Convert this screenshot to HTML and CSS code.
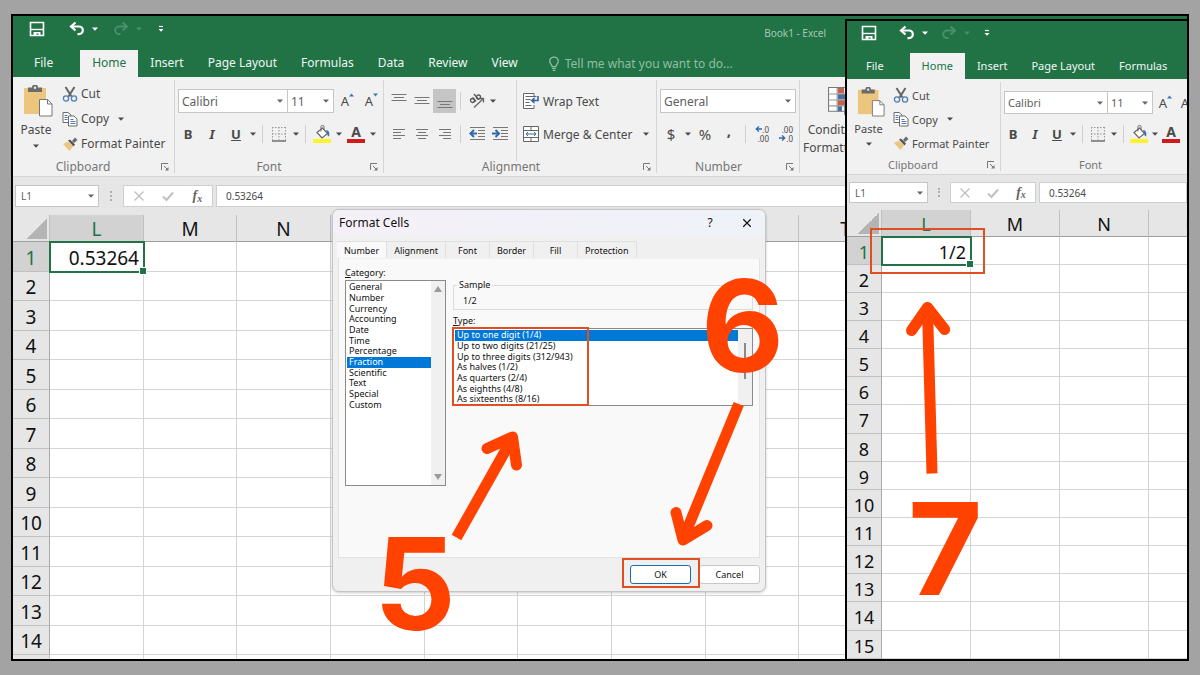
FILE: index.html
```
<!DOCTYPE html>
<html lang="en">
<head>
	<meta charset="utf-8">
	<title>Book1 - Excel</title>
	<link rel="stylesheet" href="styles.css">
</head>
<body>
	<svg class="sprite" aria-hidden="true">
		<symbol id="i-save" viewBox="0 0 16 16"><path d="M1.500 1.500h13v13h-13z" fill="none" stroke="currentColor" stroke-width="1.600"/><path d="M2 8.500h12" stroke="currentColor" stroke-width="1.400"/><path d="M4.500 11h7v3.500h-2v-2h-2v2h-3z" fill="currentColor"/></symbol>
		<symbol id="i-undo" viewBox="0 0 16 16"><path d="M3 5.500h7a3.800 3.800 0 0 1 0 7.600H8.500" fill="none" stroke="currentColor" stroke-width="2.200"/><path d="M6.500 1.500L2 5.500l4.500 4" fill="none" stroke="currentColor" stroke-width="2.200"/></symbol>
		<symbol id="i-redo" viewBox="0 0 16 16"><path d="M13 5.500H6a3.800 3.800 0 0 0 0 7.600h1.500" fill="none" stroke="currentColor" stroke-width="2"/><path d="M9.500 1.500L14 5.500l-4.500 4" fill="none" stroke="currentColor" stroke-width="2"/></symbol>
		<symbol id="i-more" viewBox="0 0 8 8"><path d="M2 1.500h4" stroke="currentColor" stroke-width="1.200"/><path d="M1.500 4h5L4 6.800z" fill="currentColor"/></symbol>
		<symbol id="i-down" viewBox="0 0 8 8"><path d="M1 2.500h6L4 5.800z" fill="currentColor"/></symbol>
		<symbol id="i-bulb" viewBox="0 0 12 18"><path d="M4 12c0-2-2.800-3-2.800-6a4.800 4.800 0 0 1 9.600 0c0 3-2.800 4-2.800 6z" fill="none" stroke="currentColor" stroke-width="1.500"/><path d="M4 14h4M4.500 16.200h3" stroke="currentColor" stroke-width="1.400"/></symbol>
		<symbol id="i-paste" viewBox="0 0 30 32"><path d="M1 3h22v26H1z" fill="#ebc67c"/><path d="M5 2.500h4a3 3 0 0 1 6 0h4V7H5z" fill="#6b6b6b"/><circle cx="12" cy="2.800" r="1.200" fill="#f1f1f1"/><path d="M16.500 14.500h8l4.500 4.500v12H16.500z" fill="#fff" stroke="#777"/><path d="M24.500 14.500V19H29" fill="none" stroke="#777"/></symbol>
		<symbol id="i-cut" viewBox="0 0 16 16"><path d="M3.500 1l6 9.500M12.500 1l-6 9.500" stroke="#666" stroke-width="2"/><circle cx="4" cy="12.500" r="2.600" fill="none" stroke="#4d7fb5" stroke-width="1.300"/><circle cx="12" cy="12.500" r="2.600" fill="none" stroke="#4d7fb5" stroke-width="1.300"/></symbol>
		<symbol id="i-copy" viewBox="0 0 16 16"><path d="M1 1.500h5L9 4v7.500H1z" fill="#fff" stroke="#6b6b6b"/><path d="M2.500 4.500h3M2.500 6.500h3M2.500 8.500h3" stroke="#4d7fb5"/><path d="M6.500 5h5.500l3 3v7H6.500z" fill="#fff" stroke="#6b6b6b"/><path d="M8.500 8.500h3M8.500 10.500h5M8.500 12.500h5" stroke="#4d7fb5"/></symbol>
		<symbol id="i-painter" viewBox="0 0 16 16"><path d="M1 8l5-2.500 5 5L7.500 15z" fill="#ebc67c"/><path d="M6 4.500l2-1 5 5-1.500 2z" fill="#555"/><path d="M10 5l3-3.500L15.500 4 12 7z" fill="#6b6b6b"/></symbol>
		<symbol id="i-launch" viewBox="0 0 8 8"><path d="M.5 7V.5H7" fill="none" stroke="#777"/><path d="M3 3l3 3" stroke="#777"/><path d="M7.500 4v3.500H4z" fill="#777"/></symbol>
		<symbol id="i-border" viewBox="0 0 16 16"><path d="M1.500 1v13M8 1v13M14.500 1v13M1 1.500h14M1 8h14" stroke="#999" stroke-dasharray="1.500 1.500"/><path d="M1 15h14" stroke="#666" stroke-width="1.400"/></symbol>
		<symbol id="i-fill" viewBox="0 0 18 18"><path d="M4 7.500l5.500-4.500 5 5.500-5.500 4.500z" fill="#fff" stroke="#666" stroke-width="1.200"/><path d="M8 6.500V1.500c0-1.500 3-1.500 3 0v3" fill="none" stroke="#666"/><path d="M13 5c3 0 4 3 3 6.500-1.500-.5-2-2-2-4z" fill="#3f76b5"/><path d="M0 14h18v4H0z" fill="#fdf32d"/></symbol>
		<symbol id="i-color" viewBox="0 0 18 4"><path d="M0 0h18v4H0z" fill="#d11a1a"/></symbol>
		<symbol id="i-grow" viewBox="0 0 6 4"><path d="M0 3.500h5L2.500.5z" fill="#3f76b5"/></symbol>
		<symbol id="i-shrink" viewBox="0 0 6 4"><path d="M0 .5h5L2.500 3.500z" fill="#3f76b5"/></symbol>
		<symbol id="i-top" viewBox="0 0 16 16"><path d="M.5 1.500h15M3 4.500h10M.5 7.500h15" stroke="#777"/></symbol>
		<symbol id="i-middle" viewBox="0 0 16 16"><path d="M.5 4.500h15M3 7.500h10M.5 10.500h15" stroke="#777"/></symbol>
		<symbol id="i-bottom" viewBox="0 0 16 16"><path d="M.5 8.500h15M3 11.500h10M.5 14.500h15" stroke="#777"/></symbol>
		<symbol id="i-left" viewBox="0 0 16 16"><path d="M2 3.500h12M2 6.500h8M2 9.500h12M2 12.500h8" stroke="#777"/></symbol>
		<symbol id="i-center" viewBox="0 0 16 16"><path d="M2 3.500h12M4 6.500h8M2 9.500h12M4 12.500h8" stroke="#777"/></symbol>
		<symbol id="i-right" viewBox="0 0 16 16"><path d="M2 3.500h12M6 6.500h8M2 9.500h12M6 12.500h8" stroke="#777"/></symbol>
		<symbol id="i-outdent" viewBox="0 0 16 16"><path d="M1 1.500h15M9 4.500h7M9 7.500h7M9 10.500h7M1 13.500h15" stroke="#777"/><path d="M1 7.500h7" stroke="#3068a8" stroke-width="2"/><path d="M5 4L1.500 7.500 5 11" fill="none" stroke="#3068a8" stroke-width="2"/></symbol>
		<symbol id="i-indent" viewBox="0 0 16 16"><path d="M1 1.500h15M9 4.500h7M9 7.500h7M9 10.500h7M1 13.500h15" stroke="#777"/><path d="M0 7.500h7" stroke="#3068a8" stroke-width="2"/><path d="M3.500 4L7 7.500 3.500 11" fill="none" stroke="#3068a8" stroke-width="2"/></symbol>
		<symbol id="i-orient" viewBox="0 0 16 16"><path d="M5 14.500L14 6M10.500 5.500h4v4" fill="none" stroke="#666" stroke-width="1.300"/><circle cx="3.500" cy="7.500" r="2" fill="none" stroke="#555" stroke-width="1.300"/><path d="M3.500 4.500l3.500 4M5 1l4.500 5.500" stroke="#555" stroke-width="1.300"/><circle cx="9.500" cy="4" r="2" fill="none" stroke="#555" stroke-width="1.300"/></symbol>
		<symbol id="i-wrap" viewBox="0 0 16 16"><path d="M11 3V.5H.5v15H11V12" fill="#fff" stroke="#666"/><path d="M2.500 3.500h11M2.500 6.500h5M2.500 9.500h4M2.500 12.500h6" stroke="#666"/><path d="M15 3v4.500H10" fill="none" stroke="#3068a8" stroke-width="1.600"/><path d="M11.500 4v7L7.500 7.500z" fill="#3068a8"/></symbol>
		<symbol id="i-merge" viewBox="0 0 16 16"><path d="M.5.5h15v15H.5z" fill="#fff" stroke="#666"/><path d="M.5 4.500h15M.5 11.500h15M8 .5v4M8 11.500v4" stroke="#666"/><path d="M3 8h10" stroke="#3068a8"/><path d="M5 6L3 8l2 2M11 6l2 2-2 2" fill="none" stroke="#3068a8"/></symbol>
		<symbol id="i-arrow-l" viewBox="0 0 8 8"><path d="M1.500 4H8M4.500 1L1.500 4l3 3" fill="none" stroke="#3068a8" stroke-width="1.600"/></symbol>
		<symbol id="i-arrow-r" viewBox="0 0 8 8"><path d="M0 4h6.500M3.500 1l3 3-3 3" fill="none" stroke="#3068a8" stroke-width="1.600"/></symbol>
		<symbol id="i-cond" viewBox="0 0 26 26"><path d="M.5.5h24v22H.5z" fill="#fff" stroke="#777"/><path d="M9 1h6v5H9zM9 12h7v5H9z" fill="#c8614c"/><path d="M9 6.500h13v5H9zM9 17.500h4v5H9z" fill="#4a6fa8"/><path d="M.5 6.500h24M.5 12h24M.5 17.500h24M8.500.5v22M16.500.5v22" stroke="#999"/><path d="M15.500 15.500h10v10h-10z" fill="#fff" stroke="#777"/></symbol>
		<symbol id="i-x" viewBox="0 0 12 12"><path d="M1.500 1.500l9 9M10.500 1.500l-9 9" stroke="currentColor" stroke-width="1.400"/></symbol>
		<symbol id="i-check" viewBox="0 0 12 12"><path d="M1 6.500l3.500 3.500L11 2.500" fill="none" stroke="currentColor" stroke-width="2"/></symbol>
	</svg>

	<main class="stage">
		<section class="window">
			<header class="titlebar">
				<div class="qat">
					<button class="save" aria-label="Save"><svg><use href="#i-save"/></svg></button>
					<div class="split"><button aria-label="Undo"><svg><use href="#i-undo"/></svg></button><button aria-label="Undo list"><svg class="tiny"><use href="#i-down"/></svg></button></div>
					<div class="split off"><button aria-label="Redo"><svg><use href="#i-redo"/></svg></button><button aria-label="Redo list"><svg class="tiny"><use href="#i-down"/></svg></button></div>
					<button aria-label="Customize toolbar"><svg class="tiny"><use href="#i-more"/></svg></button>
				</div>
				<span class="doc-name">Book1 - Excel</span>
			</header>
			<nav class="tabs">
				<a href="#" class="file">File</a>
				<a href="#" class="active">Home</a>
				<a href="#">Insert</a>
				<a href="#">Page Layout</a>
				<a href="#">Formulas</a>
				<a href="#">Data</a>
				<a href="#">Review</a>
				<a href="#">View</a>
				<label class="tell"><svg><use href="#i-bulb"/></svg><input type="text" placeholder="Tell me what you want to do..." aria-label="Tell me what you want to do"></label>
			</nav>
			<div class="ribbon">
				<div class="group clipboard">
					<div class="group-body">
						<button class="paste"><svg class="big"><use href="#i-paste"/></svg>Paste<svg class="tiny"><use href="#i-down"/></svg></button>
						<div class="stack">
							<button><svg><use href="#i-cut"/></svg>Cut</button>
							<button><svg><use href="#i-copy"/></svg>Copy<svg class="tiny"><use href="#i-down"/></svg></button>
							<button><svg><use href="#i-painter"/></svg>Format Painter</button>
						</div>
					</div>
					<div class="group-foot"><span>Clipboard</span><button aria-label="Clipboard options"><svg><use href="#i-launch"/></svg></button></div>
				</div>
				<div class="group font">
					<div class="group-body rows">
						<div class="row">
							<select class="family" aria-label="Font"><option>Calibri</option></select>
							<select class="size" aria-label="Font size"><option>11</option></select>
							<button class="tool step" aria-label="Increase font size">A<svg><use href="#i-grow"/></svg></button>
							<button class="tool step" aria-label="Decrease font size">A<svg><use href="#i-shrink"/></svg></button>
						</div>
						<div class="row">
							<button class="tool"><b>B</b></button>
							<button class="tool"><b><i>I</i></b></button>
							<button class="tool"><b><u>U</u></b></button>
							<button class="drop" aria-label="Underline style"><svg><use href="#i-down"/></svg></button>
							<span class="sep"></span>
							<button class="tool" aria-label="Borders"><svg><use href="#i-border"/></svg></button>
							<button class="drop" aria-label="Border style"><svg><use href="#i-down"/></svg></button>
							<span class="sep"></span>
							<button class="tool paint" aria-label="Fill color"><svg><use href="#i-fill"/></svg></button>
							<button class="drop" aria-label="Fill colors"><svg><use href="#i-down"/></svg></button>
							<button class="tool paint">A<svg class="bar"><use href="#i-color"/></svg></button>
							<button class="drop" aria-label="Font colors"><svg><use href="#i-down"/></svg></button>
						</div>
					</div>
					<div class="group-foot"><span>Font</span><button aria-label="Font options"><svg><use href="#i-launch"/></svg></button></div>
				</div>
				<div class="group alignment">
					<div class="group-body">
						<div class="rows">
							<div class="row">
								<button class="tool" aria-label="Top align"><svg><use href="#i-top"/></svg></button>
								<button class="tool" aria-label="Middle align"><svg><use href="#i-middle"/></svg></button>
								<button class="tool pressed" aria-label="Bottom align"><svg><use href="#i-bottom"/></svg></button>
								<span class="sep"></span>
								<button class="tool" aria-label="Orientation"><svg><use href="#i-orient"/></svg></button>
								<button class="drop" aria-label="Orientation list"><svg><use href="#i-down"/></svg></button>
							</div>
							<div class="row">
								<button class="tool" aria-label="Align left"><svg><use href="#i-left"/></svg></button>
								<button class="tool" aria-label="Center"><svg><use href="#i-center"/></svg></button>
								<button class="tool" aria-label="Align right"><svg><use href="#i-right"/></svg></button>
								<span class="sep"></span>
								<button class="tool" aria-label="Decrease indent"><svg><use href="#i-outdent"/></svg></button>
								<button class="tool" aria-label="Increase indent"><svg><use href="#i-indent"/></svg></button>
							</div>
						</div>
						<div class="rows wrapping">
							<button class="row"><svg><use href="#i-wrap"/></svg>Wrap Text</button>
							<button class="row"><svg><use href="#i-merge"/></svg>Merge &amp; Center<svg class="tiny"><use href="#i-down"/></svg></button>
						</div>
					</div>
					<div class="group-foot"><span>Alignment</span><button aria-label="Alignment options"><svg><use href="#i-launch"/></svg></button></div>
				</div>
				<div class="group number">
					<div class="group-body rows">
						<div class="row"><select class="format" aria-label="Number format"><option>General</option></select></div>
						<div class="row">
							<button class="tool sign">$</button>
							<button class="drop" aria-label="Currency list"><svg><use href="#i-down"/></svg></button>
							<button class="tool sign">%</button>
							<button class="tool sign comma">,</button>
							<span class="sep"></span>
							<button class="tool decimals"><span><svg><use href="#i-arrow-l"/></svg>.0</span><span>.00</span></button>
							<button class="tool decimals"><span>.00</span><span><svg><use href="#i-arrow-r"/></svg>.0</span></button>
						</div>
					</div>
					<div class="group-foot"><span>Number</span><button aria-label="Number options"><svg><use href="#i-launch"/></svg></button></div>
				</div>
				<div class="group styles">
					<button class="paste"><svg class="big"><use href="#i-cond"/></svg><span>Conditional</span><span>Formatting <svg class="tiny"><use href="#i-down"/></svg></span></button>
				</div>
			</div>
			<div class="formula-bar">
				<select class="name-box" aria-label="Name box"><option>L1</option></select>
				<span class="dots"></span>
				<div class="fx-box">
					<button aria-label="Cancel entry"><svg><use href="#i-x"/></svg></button>
					<button aria-label="Confirm entry"><svg><use href="#i-check"/></svg></button>
					<button class="fx"><i>f</i><i class="sub">x</i></button>
				</div>
				<input class="formula" type="text" value="0.53264" aria-label="Formula">
			</div>
			<table class="sheet" data-rows="14" data-value="0.53264">
				<thead>
					<tr><th class="corner"></th><th class="current">L</th><th>M</th><th>N</th><th>O</th><th>P</th><th>Q</th><th>R</th><th>S</th><th>T</th><th>U</th><th>V</th><th>W</th></tr>
				</thead>
				<tbody></tbody>
				<tfoot>
					<tr><th></th><td></td><td></td><td></td><td></td><td></td><td></td><td></td><td></td><td></td><td></td><td></td><td></td></tr>
				</tfoot>
			</table>
		</section>

		<section class="dialog" role="dialog" aria-labelledby="dialog-title">
			<header class="dialog-head">
				<h2 id="dialog-title">Format Cells</h2>
				<button>?</button>
				<button aria-label="Close"><svg><use href="#i-x"/></svg></button>
			</header>
			<div class="dialog-tabs" role="tablist">
				<button role="tab" class="active">Number</button>
				<button role="tab">Alignment</button>
				<button role="tab" class="narrow">Font</button>
				<button role="tab" class="narrow">Border</button>
				<button role="tab" class="narrow">Fill</button>
				<button role="tab">Protection</button>
			</div>
			<div class="panel">
				<div class="category">
					<span class="caption" id="cat-label"><u>C</u>ategory:</span>
					<div class="listbox">
						<ul role="listbox" aria-labelledby="cat-label">
							<li role="option">General</li>
							<li role="option">Number</li>
							<li role="option">Currency</li>
							<li role="option">Accounting</li>
							<li role="option">Date</li>
							<li role="option">Time</li>
							<li role="option">Percentage</li>
							<li role="option" class="picked" aria-selected="true">Fraction</li>
							<li role="option">Scientific</li>
							<li role="option">Text</li>
							<li role="option">Special</li>
							<li role="option">Custom</li>
						</ul>
						<div class="scroll"><span class="up"></span><span class="down"></span></div>
					</div>
				</div>
				<div class="detail">
					<fieldset class="sample"><legend>Sample</legend>1/2</fieldset>
					<span class="caption" id="type-label"><u>T</u>ype:</span>
					<div class="listbox types">
						<ul role="listbox" aria-labelledby="type-label">
							<li role="option" class="picked" aria-selected="true">Up to one digit (1/4)</li>
							<li role="option">Up to two digits (21/25)</li>
							<li role="option">Up to three digits (312/943)</li>
							<li role="option">As halves (1/2)</li>
							<li role="option">As quarters (2/4)</li>
							<li role="option">As eighths (4/8)</li>
							<li role="option">As sixteenths (8/16)</li>
						</ul>
						<div class="scroll"><span class="thumb"></span></div>
					</div>
				</div>
			</div>
			<footer class="dialog-foot">
				<button class="ok">OK</button>
				<button>Cancel</button>
			</footer>
		</section>

		<section class="window small">
			<header class="titlebar">
				<div class="qat">
					<button class="save" aria-label="Save"><svg><use href="#i-save"/></svg></button>
					<div class="split"><button aria-label="Undo"><svg><use href="#i-undo"/></svg></button><button aria-label="Undo list"><svg class="tiny"><use href="#i-down"/></svg></button></div>
					<div class="split off"><button aria-label="Redo"><svg><use href="#i-redo"/></svg></button><button aria-label="Redo list"><svg class="tiny"><use href="#i-down"/></svg></button></div>
					<button aria-label="Customize toolbar"><svg class="tiny"><use href="#i-more"/></svg></button>
				</div>
			</header>
			<nav class="tabs">
				<a href="#" class="file">File</a>
				<a href="#" class="active">Home</a>
				<a href="#">Insert</a>
				<a href="#">Page Layout</a>
				<a href="#">Formulas</a>
			</nav>
			<div class="ribbon">
				<div class="group clipboard">
					<div class="group-body">
						<button class="paste"><svg class="big"><use href="#i-paste"/></svg>Paste<svg class="tiny"><use href="#i-down"/></svg></button>
						<div class="stack">
							<button><svg><use href="#i-cut"/></svg>Cut</button>
							<button><svg><use href="#i-copy"/></svg>Copy<svg class="tiny"><use href="#i-down"/></svg></button>
							<button><svg><use href="#i-painter"/></svg>Format Painter</button>
						</div>
					</div>
					<div class="group-foot"><span>Clipboard</span><button aria-label="Clipboard options"><svg><use href="#i-launch"/></svg></button></div>
				</div>
				<div class="group font">
					<div class="group-body rows">
						<div class="row">
							<select class="family" aria-label="Font"><option>Calibri</option></select>
							<select class="size" aria-label="Font size"><option>11</option></select>
							<button class="tool step" aria-label="Increase font size">A<svg><use href="#i-grow"/></svg></button>
							<button class="tool step" aria-label="Decrease font size">A<svg><use href="#i-shrink"/></svg></button>
						</div>
						<div class="row">
							<button class="tool"><b>B</b></button>
							<button class="tool"><b><i>I</i></b></button>
							<button class="tool"><b><u>U</u></b></button>
							<button class="drop" aria-label="Underline style"><svg><use href="#i-down"/></svg></button>
							<span class="sep"></span>
							<button class="tool" aria-label="Borders"><svg><use href="#i-border"/></svg></button>
							<button class="drop" aria-label="Border style"><svg><use href="#i-down"/></svg></button>
							<span class="sep"></span>
							<button class="tool paint" aria-label="Fill color"><svg><use href="#i-fill"/></svg></button>
							<button class="drop" aria-label="Fill colors"><svg><use href="#i-down"/></svg></button>
							<button class="tool paint">A<svg class="bar"><use href="#i-color"/></svg></button>
						</div>
					</div>
					<div class="group-foot"><span>Font</span><button aria-label="Font options"><svg><use href="#i-launch"/></svg></button></div>
				</div>
			</div>
			<div class="formula-bar">
				<select class="name-box" aria-label="Name box"><option>L1</option></select>
				<span class="dots"></span>
				<div class="fx-box">
					<button aria-label="Cancel entry"><svg><use href="#i-x"/></svg></button>
					<button aria-label="Confirm entry"><svg><use href="#i-check"/></svg></button>
					<button class="fx"><i>f</i><i class="sub">x</i></button>
				</div>
				<input class="formula" type="text" value="0.53264" aria-label="Formula">
			</div>
			<table class="sheet" data-rows="15" data-value="1/2">
				<thead>
					<tr><th class="corner"></th><th class="current">L</th><th>M</th><th>N</th><th>O</th></tr>
				</thead>
				<tbody></tbody>
			</table>
		</section>

		<!-- step markers over the windows -->
		<span class="frame frame-types"></span>
		<span class="frame frame-ok"></span>
		<span class="frame frame-result"></span>
		<svg class="arrows" viewBox="13 16 1174 643" aria-hidden="true">
			<path d="M456.500 537.500L512.500 438"/>
			<path class="head" d="M487 448.500L512.500 437L516.500 465"/>
			<path d="M738.700 404L683.500 538"/>
			<path class="head" d="M676 512.500L683 540L707 525.500"/>
			<path d="M932 473.500L927.500 309"/>
			<path class="head" d="M911.500 330.500L927.500 307.500L944.700 329.500"/>
		</svg>
		<span class="step-5">5</span>
		<span class="step-6">6</span>
		<span class="step-7">7</span>
	</main>

	<script>
		const sheets = document.querySelectorAll('.sheet');

		function fillSheet(sheet) {
			const cols = sheet.querySelectorAll('thead th').length - 1;
			const body = sheet.querySelector('tbody');
			for (let r = 1; r <= Number(sheet.dataset.rows); r++) {
				const row = body.insertRow();
				const head = document.createElement('th');
				head.textContent = r;
				row.appendChild(head);
				for (let c = 0; c < cols; c++) {
					row.insertCell();
				}
			}
			const first = body.rows[0];
			first.cells[0].classList.add('current');
			first.cells[1].classList.add('selected');
			first.cells[1].textContent = sheet.dataset.value;
		}

		sheets.forEach(fillSheet);
	</script>
</body>
</html>
```
FILE: styles.css
```
* {
	box-sizing: border-box;
}
body {
	margin: 0;
	padding: 14px 11px;
	height: 100vh;
	background-color: #a3a3a3;
	font-family: "Noto Sans", "Open Sans", sans-serif;
	font-size: 12px;
	color: #4a4a4a;
}
button, select, input {
	margin: 0;
	padding: 0;
	border: none;
	background: none;
	border-radius: 0;
	font: inherit;
	color: inherit;
}
button {
	display: flex;
	align-items: center;
	justify-content: center;
	white-space: nowrap;
}
svg {
	flex: none;
	width: 16px;
	height: 16px;
}
.tiny {
	width: 8px;
	height: 8px;
}
.sprite {
	position: absolute;
	width: 0;
	height: 0;
}
.stage {
	position: relative;
	height: 100%;
	border: 2px solid #000;
	overflow: hidden;
}

/* excel window */
.window {
	--tool: 24px;
	--row: 24px;
	height: 100%;
	overflow: hidden;
	background-color: #fff;
}
.titlebar {
	display: flex;
	justify-content: space-between;
	height: 34px;
	padding: 0 361px 0 16px;
	background-color: #217346;
	color: #fff;
}
.qat {
	display: flex;
	align-items: center;
	gap: 14px;
	height: 26px;
}
.save {
	margin-right: 10px;
}
.split {
	display: flex;
	gap: 6px;
}
.off {
	color: #4a8f68;
}
.doc-name {
	font-size: 10px;
	line-height: 34px;
	color: #a3c9b2;
}
.tabs {
	display: flex;
	height: 27px;
	background-color: #217346;
}
.tabs a {
	padding: 0 12px;
	line-height: 26px;
	color: #f0f6f2;
	text-decoration: none;
	white-space: nowrap;
}
.tabs .file {
	padding: 0 27px 0 21px;
}
.tabs .active {
	background-color: #f1f1f1;
	color: #217346;
}
.tell {
	display: flex;
	align-items: center;
	gap: 5px;
	margin-left: 18px;
	color: #8fbfa2;
}
.tell svg {
	width: 12px;
}
.tell input {
	width: 200px;
}
.tell input::placeholder {
	color: #8fbfa2;
}
.ribbon {
	display: flex;
	height: 100px;
	background-color: #f1f1f1;
	border-bottom: 1px solid #d5d5d5;
}
.group {
	display: flex;
	flex-direction: column;
	flex: none;
	border-right: 1px solid #d5d5d5;
	margin: 3px 0;
}
.group-body {
	display: flex;
	flex: 1;
}
.group-foot {
	display: flex;
	align-items: center;
	height: 12px;
	padding-right: 5px;
	line-height: 12px;
	color: #767676;
}
.group-foot span {
	flex: 1;
	padding-right: 8px;
	text-align: center;
}
.group-foot svg {
	width: 8px;
	height: 8px;
}
.clipboard {
	width: 162px;
}
.paste {
	flex-direction: column;
	justify-content: flex-start;
	width: 46px;
	padding-top: 5px;
}
.paste .big {
	width: 30px;
	height: 32px;
	margin: 0 0 4px 4px;
}
.paste .tiny {
	margin-top: 4px;
}
.stack {
	padding-top: 1px;
	padding-left: 3px;
}
.stack button {
	gap: 3px;
	height: 25px;
}
.stack .tiny, .wrapping .tiny {
	margin-left: 5px;
}
.font {
	width: 209px;
	padding-left: 1px;
}
.alignment {
	--tool: 23px;
	width: 273px;
	padding-left: 3px;
}
.number {
	width: 143px;
	padding-left: 2px;
}
.rows {
	display: flex;
	flex-direction: column;
	gap: 9px;
	padding-top: 9px;
}
.row {
	display: flex;
	align-items: center;
	height: var(--row);
}
select {
	appearance: none;
	height: var(--row);
	padding: 0 3px;
	border: 1px solid #c6c6c6;
	background: #fff url("data:image/svg+xml,%3Csvg xmlns='http://www.w3.org/2000/svg' width='8' height='8'%3E%3Cpath d='M1 2.500h6L4 5.800z' fill='%23666'/%3E%3C/svg%3E") no-repeat right 3px center;
	color: #606060;
}
.family {
	width: 110px;
	margin-left: 2px;
}
.size {
	width: 46px;
	border-left: none;
}
.format {
	width: 136px;
	margin-left: 1px;
}
.tool {
	width: var(--tool);
	height: var(--row);
	font-size: 13px;
}
.drop {
	width: 10px;
	height: var(--row);
}
.drop svg {
	width: 8px;
	height: 8px;
}
.sep {
	width: 1px;
	height: 18px;
	margin: 0 4px;
	background-color: #d0d0d0;
}
.pressed {
	background-color: #c5c5c5;
}
.step {
	padding-left: 4px;
}
.step svg {
	width: 6px;
	height: 4px;
	margin-bottom: 12px;
}
.paint {
	flex-direction: column;
	font-weight: bold;
	font-size: 14px;
	line-height: 14px;
}
.paint svg {
	width: 18px;
	height: 18px;
}
.paint .bar {
	height: 4px;
}
.sign {
	font-size: 15px;
}
.comma {
	padding-bottom: 8px;
	font-weight: bold;
}
.decimals {
	flex-direction: column;
	align-items: flex-end;
	padding-right: 5px;
	font-size: 8px;
	line-height: 9px;
}
.decimals span {
	display: flex;
}
.decimals svg {
	width: 7px;
	height: 8px;
}
.wrapping {
	margin-left: 5px;
	padding-left: 6px;
	border-left: 1px solid #d5d5d5;
}
.wrapping .row {
	justify-content: flex-start;
	gap: 4px;
}
.styles {
	border: none;
}
.styles .paste {
	width: 80px;
	padding-top: 7px;
	line-height: 18px;
}
.styles .big {
	width: 28px;
	height: 28px;
	margin-bottom: 6px;
}

/* formula bar */
.formula-bar {
	display: flex;
	height: 38px;
	padding: 8px 0 8px 2px;
	background-color: #e6e6e6;
	font-size: 10px;
}
.name-box {
	width: 84px;
	height: 100%;
	padding-left: 5px;
	font-size: 10px;
}
.dots {
	width: 1px;
	margin: 6px 11px;
	border-left: 2px dotted #b0b0b0;
}
.fx-box {
	display: flex;
	width: 90px;
	border: 1px solid #cfcfcf;
	background-color: #fff;
	color: #c0c0c0;
}
.fx-box button {
	flex: 1;
}
.fx-box svg {
	width: 12px;
	height: 12px;
}
.fx-box .fx {
	font-family: "Liberation Serif", serif;
	font-size: 14px;
	font-weight: bold;
	color: #666;
}
.fx .sub {
	font-size: 10px;
	padding-top: 4px;
}
.formula {
	flex: 1;
	min-width: 0;
	margin-left: 3px;
	padding-left: 9px;
	border: 1px solid #cfcfcf;
	background-color: #fff;
}

/* cells */
.sheet {
	table-layout: fixed;
	width: 0;
	border-spacing: 0;
	font-size: 19px;
	line-height: 24px;
	color: #111;
}
.sheet th, .sheet td {
	padding: 2px 0 0;
	border-right: 1px solid #d4d4d4;
	border-bottom: 1px solid #d4d4d4;
}
.sheet th {
	background-color: #e6e6e6;
	border-color: #c0c0c0;
	font-weight: normal;
	text-align: center;
}
.sheet thead th {
	width: 94px;
	height: 27px;
	border-bottom-color: #9e9e9e;
}
.sheet thead th:nth-child(3n) {
	width: 93px;
}
.sheet thead .corner {
	width: 37px;
	background-image: linear-gradient(135deg, transparent 50%, #b4b4b4 50%);
	background-size: 21px 21px;
	background-position: right 2px bottom 2px;
	background-repeat: no-repeat;
}
.sheet tbody th {
	border-right-color: #a8a8a8;
}
.sheet .current {
	background-color: #d2d2d2;
	color: #217346;
}
.sheet tbody tr, .sheet tfoot tr {
	height: 29px;
}
.sheet tbody tr:nth-child(odd) {
	height: 30px;
}
.sheet .selected {
	position: relative;
	padding-right: 4px;
	outline: 2px solid #217346;
	outline-offset: -1px;
	text-align: right;
}
.selected::after {
	content: "";
	position: absolute;
	right: -4px;
	bottom: -4px;
	width: 6px;
	height: 6px;
	border: 1px solid #fff;
	background-color: #217346;
}

/* second window on top of the first */
.small {
	--tool: 22px;
	--row: 23px;
	position: absolute;
	top: 3px;
	right: 0;
	bottom: 0;
	width: 342px;
	height: auto;
	border-top: 2px solid #000;
	border-left: 2px solid #000;
	font-size: 11px;
}
.small .titlebar {
	height: 32px;
	padding: 0 0 0 14px;
}
.small .qat {
	height: 24px;
	gap: 12px;
}
.small .tabs {
	height: 26px;
}
.small .tabs .file {
	padding: 0 26px 0 19px;
}
.small .ribbon {
	height: 96px;
}
.small .clipboard {
	width: 154px;
}
.small .paste {
	width: 43px;
}
.small .paste .big {
	width: 28px;
	height: 30px;
}
.small .stack button {
	height: 24px;
}
.small .rows {
	gap: 8px;
}
.small .font {
	width: 200px;
}
.small .family {
	width: 104px;
}
.small .size {
	width: 45px;
}
.small .formula-bar {
	height: 35px;
	padding: 7px 0 7px 2px;
}
.small .name-box {
	width: 79px;
}
.small .dots {
	margin: 6px 10px;
}
.small .fx-box {
	width: 86px;
}
.small .sheet {
	font-size: 18px;
}
.small .sheet thead th {
	width: 89px;
}
.small .sheet thead .corner {
	width: 35px;
}
.small .sheet tbody tr {
	height: 28px;
}
.small .sheet tbody tr:nth-child(7n) {
	height: 29px;
}

/* format cells dialog */
.dialog {
	position: absolute;
	left: 319px;
	top: 193px;
	width: 434px;
	border: 1px solid #c4c4c8;
	border-radius: 7px;
	background-color: #f0f0f0;
	box-shadow: 0 1px 3px rgba(0, 0, 0, 0.2);
	font-size: 9px;
	color: #111;
	overflow: hidden;
}
.dialog-head {
	display: flex;
	align-items: center;
	height: 25px;
	padding: 0 12px 0 6px;
	background: linear-gradient(to right, #f5f0f8, #eff2f9);
}
.dialog-head h2 {
	flex: 1;
	margin: 0;
	font-size: 12px;
	font-weight: normal;
}
.dialog-head button {
	width: 12px;
	margin-left: 25px;
	font-size: 12px;
}
.dialog-head svg {
	width: 10px;
	height: 10px;
}
.dialog-tabs {
	display: flex;
	padding: 6px 4px 0;
}
.dialog-tabs button {
	height: 17px;
	padding: 0 7px;
	border-right: 1px solid #e0e0e0;
	border-top: 1px solid #e0e0e0;
}
.dialog-tabs .active {
	background-color: #f9f9f9;
}
.dialog-tabs .narrow {
	width: 44px;
}
.panel {
	display: flex;
	gap: 7px;
	height: 300px;
	margin: 0 5px;
	padding: 7px 6px;
	border: 1px solid #e2e2e2;
	border-top-color: #f0f0f0;
	background-color: #f9f9f9;
}
.caption {
	display: block;
	height: 14px;
	line-height: 13px;
}
.category {
	width: 101px;
}
.detail {
	flex: 1;
	min-width: 0;
	padding-top: 13px;
}
.listbox {
	display: flex;
	height: 206px;
	border: 1px solid #8a8a8a;
	background-color: #fff;
}
.listbox ul {
	flex: 1;
	margin: 0;
	padding: 1px 0 0 1px;
	list-style: none;
}
.listbox li {
	height: 11px;
	padding-left: 2px;
	line-height: 10px;
}
.listbox li:nth-child(3n) {
	height: 10px;
}
.listbox .picked {
	background-color: #0078d7;
	color: #fff;
}
.types {
	height: 78px;
}
.scroll {
	display: flex;
	flex-direction: column;
	justify-content: space-between;
	align-items: center;
	width: 14px;
	padding: 5px 0;
	background-color: #f0f0f0;
}
.up, .down {
	border: 4px solid transparent;
	border-top: none;
	border-bottom: 6px solid #9a9a9a;
}
.down {
	border-bottom: none;
	border-top: 6px solid #9a9a9a;
}
.thumb {
	width: 2px;
	height: 36px;
	margin-top: 9px;
	background-color: #8a8a8a;
}
.sample {
	height: 31px;
	margin: 0 0 4px;
	padding: 4px 9px 0;
	border: 1px solid #dcdcdc;
	line-height: 12px;
}
.sample legend {
	margin-left: -6px;
	padding: 0 2px;
}
.dialog-foot {
	display: flex;
	justify-content: flex-end;
	gap: 8px;
	padding: 7px 5px;
}
.dialog-foot button {
	width: 61px;
	height: 19px;
	border: 1px solid #c8c8c8;
	border-radius: 3px;
	background-color: #fff;
}
.dialog-foot .ok {
	border-color: #1c6bb0;
}

/* markers */
.frame {
	position: absolute;
	border: 2px solid #e04e22;
}
.frame-types {
	left: 439px;
	top: 311px;
	width: 137px;
	height: 79px;
}
.frame-ok {
	left: 609px;
	top: 542px;
	width: 78px;
	height: 30px;
}
.frame-result {
	left: 857px;
	top: 212px;
	width: 115px;
	height: 46px;
}
.arrows {
	position: absolute;
	left: 0;
	top: 0;
	width: 1174px;
	height: 643px;
	fill: none;
	stroke: #ff4200;
	stroke-width: 11;
}
.head {
	stroke-linecap: round;
	stroke-linejoin: round;
}
.step-5, .step-6, .step-7 {
	position: absolute;
	font-family: Inter, sans-serif;
	font-size: 128px;
	font-weight: bold;
	line-height: 128px;
	color: #ff4200;
}
.step-5 {
	left: 361px;
	top: 504px;
}
.step-6 {
	left: 688px;
	top: 246px;
}
.step-7 {
	left: 895px;
	top: 469px;
}
```
